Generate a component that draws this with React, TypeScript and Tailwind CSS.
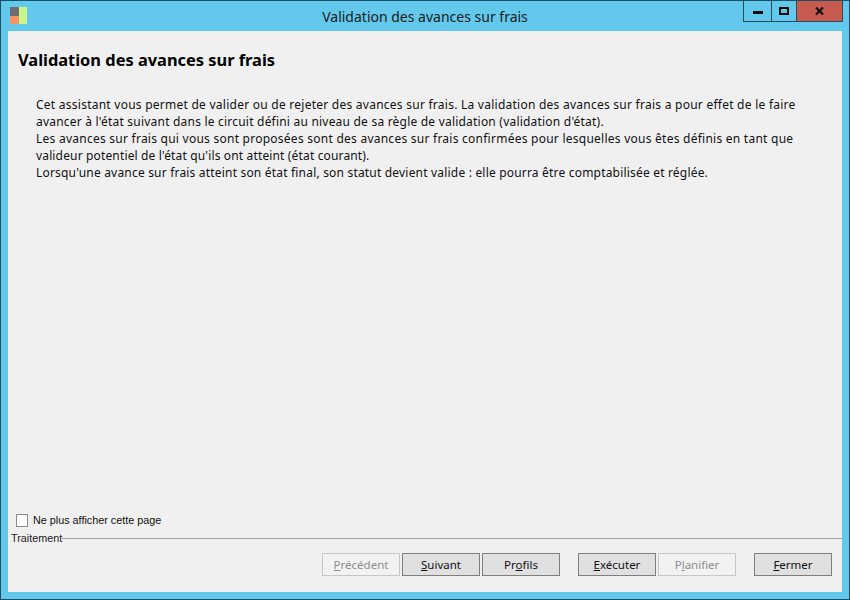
const font = "font-['Noto_Sans','Open_Sans',sans-serif]"

function WizardButton({ label, mnemonic, disabled }: { label: string; mnemonic: number; disabled?: boolean }) {
  return (
    <div
      className={
        disabled
          ? 'flex h-[23px] w-[78px] items-center justify-center border border-[#c6c6c6] bg-[#f2f2f2] text-[11.5px] text-[#8d8d8d]'
          : 'flex h-[23px] w-[78px] items-center justify-center border border-[#7d7d7d] bg-[#e0e0e0] text-[11.5px] text-[#111]'
      }
    >
      <span>
        {label.slice(0, mnemonic)}
        <span className="underline">{label[mnemonic]}</span>
        {label.slice(mnemonic + 1)}
      </span>
    </div>
  )
}

export default function App() {
  return (
    <div className={`flex h-[600px] w-[850px] flex-col overflow-hidden border border-[#1d4f66] bg-[#63c9ec] ${font}`}>
      <div className="relative flex h-[30px] shrink-0 items-start pl-[9px] pt-[6px]">
        <svg width="17" height="17" viewBox="0 0 17 17">
          <rect x="0" y="0" width="9" height="9" fill="#6e6e70" />
          <rect x="0" y="9" width="9" height="8" fill="#f79263" />
          <rect x="9" y="0" width="8" height="17" fill="#c9f58c" />
        </svg>
        <div className="absolute inset-x-0 top-[6px] text-center text-sm leading-5 text-[#1a1a1a]">
          Validation des avances sur frais
        </div>
        <div className="absolute right-[6px] top-0 flex h-[21px] border-x border-b border-[#2b4a5c]">
          <div className="flex w-[28px] items-center justify-center border-r border-[#2b4a5c]">
            <div className="mt-[3px] h-[3px] w-[10px] bg-[#0c0c0c]" />
          </div>
          <div className="flex w-[25px] items-center justify-center border-r border-[#2b4a5c]">
            <div className="h-[8px] w-[10px] border-2 border-[#0c0c0c]" />
          </div>
          <div className="flex w-[45px] items-center justify-center bg-[#c75b4f]">
            <svg width="9" height="8" viewBox="0 0 9 8">
              <path d="M1 0.5 L8 7.5 M8 0.5 L1 7.5" stroke="#111" strokeWidth="2.2" />
            </svg>
          </div>
        </div>
      </div>

      <div className="mx-[7px] mb-[7px] flex min-h-0 flex-1 flex-col bg-[#f0f0f0]">
        <h1 className="ml-[10px] mt-[18px] text-[16.4px] font-bold leading-[22px] text-black">
          Validation des avances sur frais
        </h1>
        <div className="ml-[28px] mt-[25px] text-xs leading-[17px] text-[#111]">
          <p className="tracking-[0.25px]">Cet assistant vous permet de valider ou de rejeter des avances sur frais. La validation des avances sur frais a pour effet de le faire</p>
          <p className="tracking-[0.21px]">avancer à l'état suivant dans le circuit défini au niveau de sa règle de validation (validation d'état).</p>
          <p className="tracking-[0.25px]">Les avances sur frais qui vous sont proposées sont des avances sur frais confirmées pour lesquelles vous êtes définis en tant que</p>
          <p className="tracking-[0.15px]">valideur potentiel de l'état qu'ils ont atteint (état courant).</p>
          <p className="tracking-[0.19px]">Lorsqu'une avance sur frais atteint son état final, son statut devient valide : elle pourra être comptabilisée et réglée.</p>
        </div>

        <div className="mt-auto flex items-center gap-[5px] pl-[8px]">
          <div className="h-[13px] w-[12px] border border-[#8a8a8a] bg-white" />
          <span className="font-['Liberation_Sans',sans-serif] text-[10.8px] leading-4 text-[#111]">Ne plus afficher cette page</span>
        </div>
        <div className="mt-[3px] flex items-center pl-[3px]">
          <span className="font-['Liberation_Sans',sans-serif] text-[10.8px] leading-[14px] text-[#222]">Traitement</span>
          <div className="h-px flex-1 bg-[#a0a0a0]" />
        </div>
        <div className="mb-[16px] mr-[10px] mt-[8px] flex justify-end">
          <div className="flex gap-[2px]">
            <WizardButton label="Précédent" mnemonic={0} disabled />
            <WizardButton label="Suivant" mnemonic={0} />
            <WizardButton label="Profils" mnemonic={2} />
          </div>
          <div className="ml-[18px] flex gap-[2px]">
            <WizardButton label="Exécuter" mnemonic={0} />
            <WizardButton label="Planifier" mnemonic={1} disabled />
          </div>
          <div className="ml-[18px]">
            <WizardButton label="Fermer" mnemonic={0} />
          </div>
        </div>
      </div>
    </div>
  )
}
